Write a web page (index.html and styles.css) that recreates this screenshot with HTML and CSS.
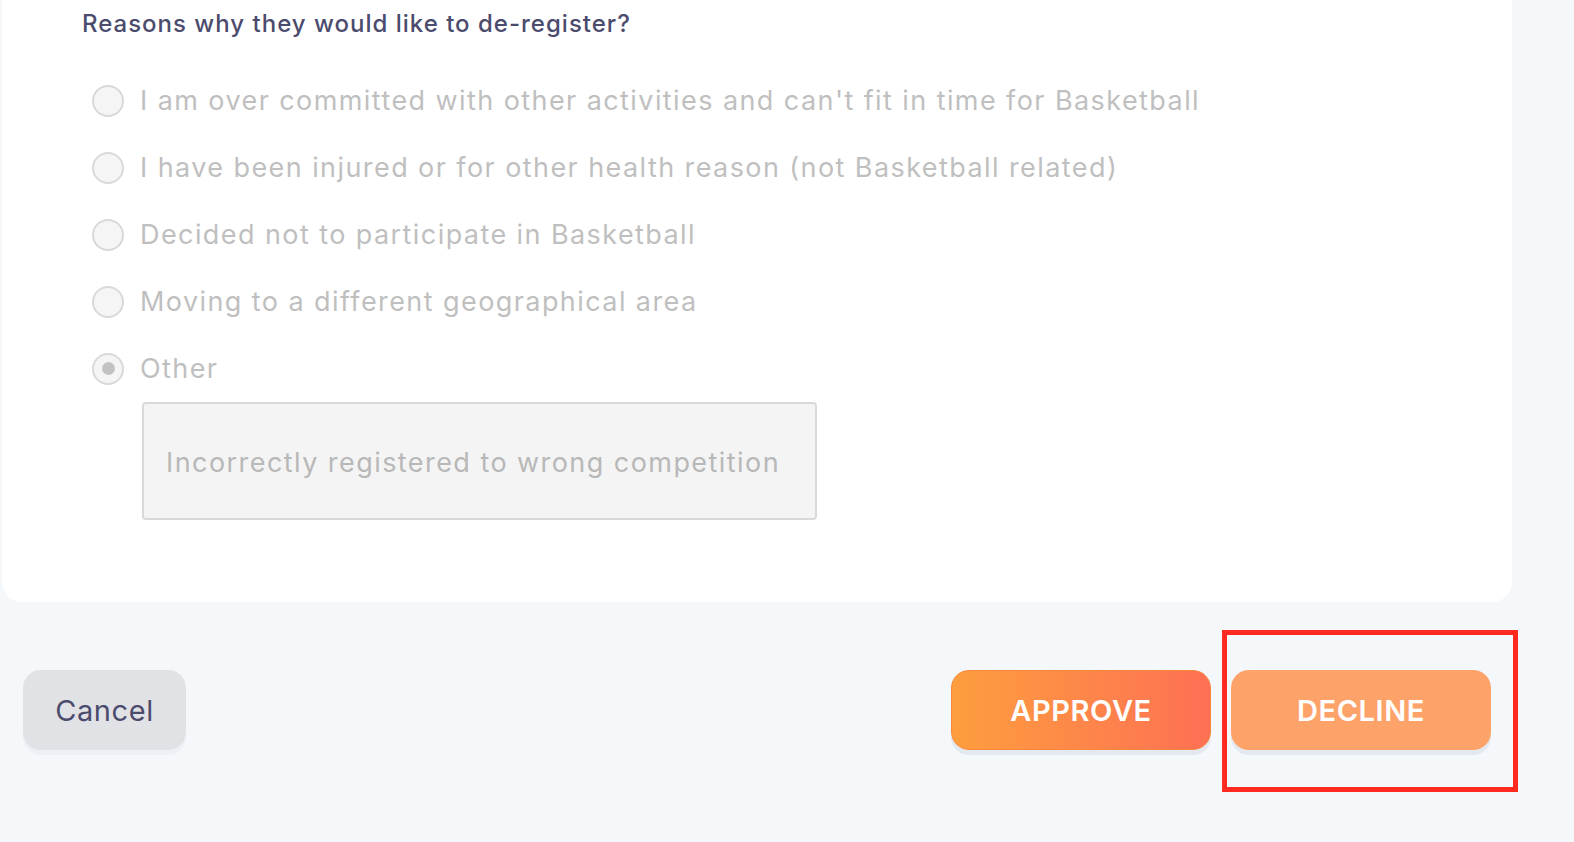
FILE: index.html
```html
<!DOCTYPE html>
<html lang="en">
<head>
<meta charset="utf-8">
<title>De-register request</title>
<link rel="stylesheet" href="styles.css">
</head>
<body>
<div class="page">
  <section class="card">
    <h2 class="question">Reasons why they would like to de-register?</h2>
    <ul class="options">
      <li class="option"><span class="radio"></span><span class="label">I am over committed with other activities and can't fit in time for Basketball</span></li>
      <li class="option"><span class="radio"></span><span class="label">I have been injured or for other health reason (not Basketball related)</span></li>
      <li class="option"><span class="radio"></span><span class="label">Decided not to participate in Basketball</span></li>
      <li class="option"><span class="radio"></span><span class="label">Moving to a different geographical area</span></li>
      <li class="option"><span class="radio radio-checked"></span><span class="label">Other</span></li>
    </ul>
    <div class="other-text">Incorrectly registered to wrong competition</div>
  </section>
  <footer class="actions">
    <button class="btn btn-cancel" type="button">Cancel</button>
    <div class="actions-right">
      <button class="btn btn-approve" type="button">APPROVE</button>
      <div class="highlight-wrap">
        <button class="btn btn-decline" type="button">DECLINE</button>
        <span class="highlight"></span>
      </div>
    </div>
  </footer>
</div>
</body>
</html>
```
FILE: styles.css
```css
* { box-sizing: border-box; }
html, body {
  margin: 0;
  padding: 0;
  background: #f5f8fb;
  font-family: Inter, "Noto Sans", "Liberation Sans", sans-serif;
}
.page {
  width: 1574px;
  height: 842px;
  overflow: hidden;
}
.card {
  margin-left: 2px;
  width: 1510px;
  background: #ffffff;
  border-radius: 0 0 20px 20px;
  padding: 9px 0 82px 80px;
}
.question {
  margin: 0;
  font-size: 24px;
  line-height: 30px;
  font-weight: 500;
  letter-spacing: 1px;
  color: #4b4c6d;
}
.options {
  list-style: none;
  margin: 28px 0 0 0;
  padding: 0;
}
.option {
  height: 67px;
  display: flex;
  align-items: center;
  padding-left: 10px;
}
.radio {
  width: 32px;
  height: 32px;
  flex: 0 0 32px;
  border-radius: 50%;
  border: 2px solid #d9d9d9;
  background: #f5f5f5;
  display: flex;
  align-items: center;
  justify-content: center;
}
.radio-checked::after {
  content: "";
  width: 13px;
  height: 13px;
  border-radius: 50%;
  background: #c2c2c2;
}
.label {
  margin-left: 16px;
  font-size: 27px;
  letter-spacing: 1.42px;
  color: #bfbfbf;
  white-space: nowrap;
}
.other-text {
  margin-left: 60px;
  width: 675px;
  height: 118px;
  border: 2px solid #d9d9d9;
  border-radius: 4px;
  background: #f4f4f4;
  display: flex;
  align-items: center;
  padding: 2px 22px 0 22px;
  font-size: 27px;
  letter-spacing: 1.44px;
  color: #b8b8b8;
  white-space: nowrap;
}
.actions {
  display: flex;
  justify-content: space-between;
  align-items: flex-start;
  padding: 68px 83px 0 23px;
}
.actions-right {
  display: flex;
  gap: 20px;
}
.btn {
  height: 80px;
  border: none;
  border-radius: 18px;
  font-family: Inter, "Noto Sans", "Liberation Sans", sans-serif;
  font-size: 29px;
  letter-spacing: 0.6px;
  cursor: pointer;
  box-shadow: 0 5px 0 rgba(200, 210, 222, 0.4);
}
.btn-cancel {
  width: 163px;
  background: #e1e2e5;
  color: #4b4c6d;
  font-weight: 400;
  box-shadow: 0 5px 0 rgba(225, 228, 234, 0.4);
}
.btn-approve {
  width: 260px;
  background: linear-gradient(to right, #fd9e3e, #fe7054);
  border: 1px solid #f8873e;
  color: #ffffff;
  font-weight: 600;
}
.btn-decline {
  width: 260px;
  background: #fda36a;
  color: #ffffff;
  font-weight: 600;
}
.highlight-wrap {
  position: relative;
}
.highlight {
  position: absolute;
  left: -9px;
  top: -40px;
  right: -27px;
  bottom: -42px;
  border: 5px solid #ff2a1f;
  pointer-events: none;
}
```
